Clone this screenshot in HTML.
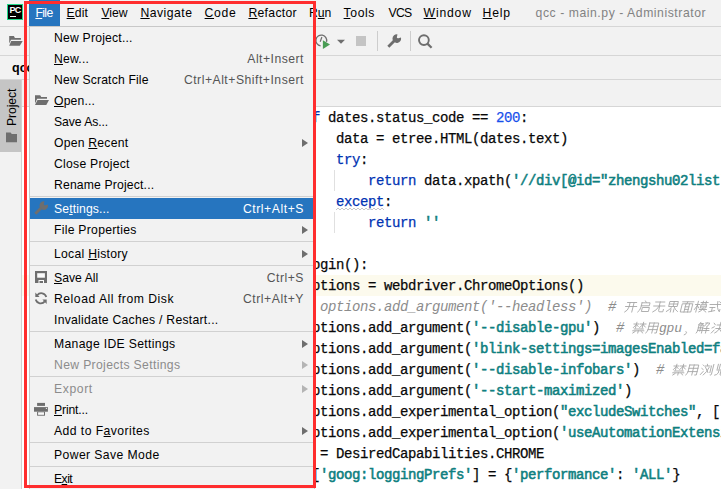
<!DOCTYPE html>
<html><head><meta charset="utf-8">
<style>
*{margin:0;padding:0;box-sizing:border-box}
html,body{width:721px;height:489px;overflow:hidden;background:#f2f2f2;position:relative;font-family:"Liberation Sans",sans-serif;font-size:12.2px;color:#000}
.abs{position:absolute}
u{text-decoration:underline;text-underline-offset:1px;text-decoration-thickness:1px}
.mi{position:absolute;top:5px;white-space:nowrap;line-height:16px}
.ln{position:absolute;height:21px;line-height:21px;font-family:"Liberation Mono",monospace;font-size:14px;letter-spacing:-0.4px;white-space:pre;color:#080808;-webkit-text-stroke:0.25px currentColor}
.kw{color:#0033b3}
.num{color:#1750eb}
.str{color:#0f8080;-webkit-text-stroke:0.55px currentColor}
.cmt{color:#8c8c8c;font-style:italic;-webkit-text-stroke:0}
#popup{left:29px;top:26px;width:286px;height:470px;background:#f2f2f2;border:1px solid #c8c8c8}
.it{position:absolute;left:0;width:284px;height:21px;line-height:21px;white-space:nowrap}
.it .t{position:absolute;left:24px;top:0}
.it .k{position:absolute;right:10px;top:0;color:#555}
.it.dis{color:#8c8c8c}
.it.sel{background:#2675bf;color:#fff}
.it.sel .k{color:#fff}
.arr{position:absolute;left:272px;top:7px;width:0;height:0;border-top:4px solid transparent;border-bottom:4px solid transparent;border-left:6px solid #6e6e6e}
.arr.dis{border-left-color:#b4b4b4}
.sep{position:absolute;left:0;width:284px;height:1px;background:#d1d1d1}
.ico{position:absolute;left:4px;top:3px;width:16px;height:16px}
#red{left:24px;top:1px;width:292px;height:487px;border:3px solid #ff2d2e}
</style></head><body>
<div class="abs" style="left:0;top:26px;width:721px;height:1px;background:#d6d6d6"></div>
<div class="abs" style="left:0;top:55px;width:721px;height:1px;background:#d6d6d6"></div>
<div class="abs" style="left:0;top:79px;width:721px;height:1px;background:#d6d6d6"></div>
<div class="abs" style="left:22px;top:106px;width:699px;height:1px;background:#d6d6d6"></div>
<div class="abs" style="left:21px;top:80px;width:1px;height:409px;background:#d0d0d0"></div>
<div class="abs" style="left:0;top:80px;width:21px;height:72px;background:#c5c5c5"></div>
<div class="abs" style="left:22px;top:107px;width:699px;height:382px;background:#fff"></div>
<div class="abs" style="left:7px;top:4px;width:16px;height:16px;background:#21d789;"></div>
<div class="abs" style="left:8px;top:5px;width:14px;height:14px;background:#000;"></div>
<div class="abs" style="left:9.5px;top:5px;font-size:9px;font-weight:bold;color:#fff;line-height:10px;letter-spacing:-0.7px">PC</div>
<div class="abs" style="left:10px;top:16px;width:6px;height:1px;background:#fff"></div>
<div class="abs" style="left:29px;top:0;width:31px;height:26px;background:#2675bf"></div>
<div class="mi" id="mFile" style="left:35.4px;color:#fff;letter-spacing:-0.599px;"><u>F</u>ile</div>
<div class="mi" id="mEdit" style="left:66.6px;letter-spacing:0.134px;"><u>E</u>dit</div>
<div class="mi" id="mView" style="left:101.4px;"><u>V</u>iew</div>
<div class="mi" id="mNav" style="left:140.4px;letter-spacing:0.486px;"><u>N</u>avigate</div>
<div class="mi" id="mCode" style="left:204.6px;letter-spacing:0.667px;"><u>C</u>ode</div>
<div class="mi" id="mRef" style="left:248.4px;letter-spacing:0.313px;"><u>R</u>efactor</div>
<div class="mi" id="mRun" style="left:309.0px;">R<u>u</u>n</div>
<div class="mi" id="mTools" style="left:343.6px;letter-spacing:0.600px;"><u>T</u>ools</div>
<div class="mi" id="mVCS" style="left:388.6px;letter-spacing:-0.800px;">VCS</div>
<div class="mi" id="mWin" style="left:423.6px;letter-spacing:0.800px;"><u>W</u>indow</div>
<div class="mi" id="mHelp" style="left:482.6px;letter-spacing:0.799px;"><u>H</u>elp</div>
<div class="mi" id="mTitle" style="left:535.6px;color:#828282;letter-spacing:0.556px;">qcc - main.py - Administrator</div>
<div class="abs" style="left:12px;top:60px;font-weight:bold;font-size:12.5px;line-height:16px">qcc</div>
<div class="abs" style="left:22px;top:275px;width:699px;height:21px;background:#fcfaed"></div>
<div class="abs" style="left:334px;top:170px;width:1px;height:21px;background:#e0e0e0"></div>
<div class="abs" style="left:334px;top:212px;width:1px;height:21px;background:#e0e0e0"></div>
<div class="ln" style="left:304px;top:108px"><span class="kw">if</span> dates.status_code == <span class="num">200</span>:</div>
<div class="ln" style="left:336px;top:129px">data = etree.HTML(dates.text)</div>
<div class="ln" style="left:336px;top:150px"><span class="kw">try</span>:</div>
<div class="ln" style="left:368px;top:171px"><span class="kw">return</span> data.xpath(<span class="str">'//div[@id="zhengshu02list"]'</span></div>
<div class="ln" style="left:336px;top:192px"><span class="kw">except</span>:</div>
<div class="ln" style="left:368px;top:213px"><span class="kw">return</span> <span class="str">''</span></div>
<div class="ln" style="left:272px;top:255px"><span class="kw">def</span> login():</div>
<div class="ln" style="left:304px;top:276px">options = webdriver.ChromeOptions()</div>
<div class="ln" style="left:304px;top:297px"><span class="cmt"># options.add_argument('--headless')  # </span></div>
<div class="ln" style="left:304px;top:318px">options.add_argument(<span class="str">'--disable-gpu'</span>)  <span class="cmt"># </span></div>
<div class="ln" style="left:304px;top:339px">options.add_argument(<span class="str">'blink-settings=imagesEnabled=false'</span>)</div>
<div class="ln" style="left:304px;top:360px">options.add_argument(<span class="str">'--disable-infobars'</span>)  <span class="cmt"># </span></div>
<div class="ln" style="left:304px;top:381px">options.add_argument(<span class="str">'--start-maximized'</span>)</div>
<div class="ln" style="left:304px;top:402px">options.add_experimental_option(<span class="str">"excludeSwitches"</span>, [<span class="str">"enable-automation"</span>])</div>
<div class="ln" style="left:304px;top:423px">options.add_experimental_option(<span class="str">'useAutomationExtension'</span>, False)</div>
<div class="ln" style="left:296px;top:444px">dc = DesiredCapabilities.CHROME</div>
<div class="ln" style="left:296px;top:465px">dc[<span class="str">'goog:loggingPrefs'</span>] = {<span class="str">'performance'</span>: <span class="str">'ALL'</span>}</div>
<svg class="abs" style="left:336px;top:207px" width="48" height="4"><path d="M0 3 L2 1 L4 3 L6 1 L8 3 L10 1 L12 3 L14 1 L16 3 L18 1 L20 3 L22 1 L24 3 L26 1 L28 3 L30 1 L32 3 L34 1 L36 3 L38 1 L40 3 L42 1 L44 3 L46 1 L48 3" stroke="#c8c8c8" stroke-width="1" fill="none"/></svg>
<svg class="abs" style="left:0;top:0;pointer-events:none" width="721" height="489"><g stroke="#a6a6a6" stroke-width="0.85" fill="none" stroke-linecap="square"><path transform="translate(625.0 301) skewX(-14) translate(1.5 0)" d="M1.5 1.5H10.5 M0.5 5.5H11.5 M4 1.5V6 Q3.8 9.5 1 11 M8 1.5V11"/><path transform="translate(639.0 301) skewX(-14) translate(1.5 0)" d="M5 0L6 1.2 M2 1.8H10V4.8H2 M2 1.8V6Q2 9.5 0 11 M4 6.5H10.5V10.5H4Z"/><path transform="translate(653.0 301) skewX(-14) translate(1.5 0)" d="M1.5 1H10.5 M0.5 5H11.5 M6 1V5Q4.5 9.5 1 11 M6.5 5V9.5Q6.5 10.8 8 10.8H11V8.5"/><path transform="translate(667.0 301) skewX(-14) translate(1.5 0)" d="M2 0.5H10V5.5H2Z M6 0.5V5.5 M2 3H10 M4.5 6.5Q3 9 0.5 10.5 M7.5 6.5Q9 9 11.5 10.5 M4.5 8V11 M7.5 8V11"/><path transform="translate(681.0 301) skewX(-14) translate(1.5 0)" d="M0.5 0.8H11.5 M5.5 0.8L5 2.8 M1 2.8H11V11H1Z M4.2 2.8V11 M7.8 2.8V11 M4.2 5.8H7.8 M4.2 8.4H7.8"/><path transform="translate(695.0 301) skewX(-14) translate(1.5 0)" d="M0 3.5H4 M2 0.3V11 M2 4.5L0 8.5 M2 4.5L4 7 M5 1.5H12 M7 0.3V2.8 M10 0.3V2.8 M6 3.3H11V7H6Z M6 5.2H11 M5 8.5H12 M8.5 7Q8.2 10 5 11 M8.5 8.5L12 11"/><path transform="translate(709.0 301) skewX(-14) translate(1.5 0)" d="M0.5 3.5H11 M7.5 0.5Q7.8 7.5 11.5 10.8V8.5 M9.5 0.8L10.8 2 M1 6.5H6 M3.5 6.5V10.2 M0.8 10.8L6.5 9.6"/><path transform="translate(633.0 322) skewX(-14) translate(1.5 0)" d="M0 2H5 M2.5 0.3V6 M2.5 2.5L0.3 5.5 M2.5 2.5L4.8 4.5 M6.5 2H12 M9.2 0.3V6 M9.2 2.5L6.5 5.5 M9.2 2.5L12 5 M1.5 7H10.5 M0.5 8.8H11.5 M6 8.8V11 M3 9.5L1 11 M9 9.5L11 11"/><path transform="translate(647.0 322) skewX(-14) translate(1.5 0)" d="M1.5 1H10.5V11H9 M1.5 1V7Q1.5 10 0 11 M1.5 4.3H10.5 M1.5 7.6H10.5 M6 1V11"/><path transform="translate(685.0 322) skewX(-14) translate(1.5 0)" d="M2 9.5Q3 10 2.5 11.5Q2 12.5 1 12.8"/><path transform="translate(697.5 322) skewX(-14) translate(1.5 0)" d="M2 0.3L0.5 2.5 M2 1.5H5L4 3 M0.8 3H5.2V11 M0.8 3V8Q0.8 10 0 11 M0.8 5.8H5.2 M0.8 8.4H5.2 M3 3V9 M7 1H11Q11 3.5 9 4.5 M8.5 1Q8 3 6.5 4 M6.5 6.5H11.5 M6 8.5H12 M9.2 5V11"/><path transform="translate(711.5 322) skewX(-14) translate(1.5 0)" d="M1.5 1.2L3 2.8 M0.5 6L2.5 4.8 M1 11L3.2 8 M5 3H11V6.5 M4.5 6.5H12 M8 0.3V6.5Q7 10 4.5 11 M8.2 7L11.8 11"/><path transform="translate(673.0 364) skewX(-14) translate(1.5 0)" d="M0 2H5 M2.5 0.3V6 M2.5 2.5L0.3 5.5 M2.5 2.5L4.8 4.5 M6.5 2H12 M9.2 0.3V6 M9.2 2.5L6.5 5.5 M9.2 2.5L12 5 M1.5 7H10.5 M0.5 8.8H11.5 M6 8.8V11 M3 9.5L1 11 M9 9.5L11 11"/><path transform="translate(687.0 364) skewX(-14) translate(1.5 0)" d="M1.5 1H10.5V11H9 M1.5 1V7Q1.5 10 0 11 M1.5 4.3H10.5 M1.5 7.6H10.5 M6 1V11"/><path transform="translate(701.0 364) skewX(-14) translate(1.5 0)" d="M1 1L2.5 2.2 M0.5 4.5L2 5.5 M0.5 10.5L2.5 7.5 M5 0.3L5.5 1.5 M3.5 2H8 M4 3.5L7.5 8.5 M7.5 3.5Q6.5 8 3.5 11 M9.5 2V8.5 M11.5 0.5V10.5Q11.5 11.3 10.5 11"/><path transform="translate(715.0 364) skewX(-14) translate(1.5 0)" d="M2 0.3V5 M4 0.3V5 M6.5 0.3L5.8 2.5 M6.5 1.5H11 M7.5 2.5L9 3.5 M2 6H10V9.5 M4 7V9 Q3 11 1 11.2 M6.2 7V10.5Q6.2 11.2 7 11.2H11V10"/></g></svg><div class="ln cmt" style="left:659px;top:318px;font-size:13px;letter-spacing:-0.2px">gpu</div>

<svg class="abs" style="left:7px;top:33px" width="18" height="16" viewBox="0 0 18 16"><path d="M2.2 3.1H6.9L7.9 5.1H13.9V6.7H4L2.2 10.5Z" fill="#6e6e6e"/><path d="M4.2 8H15.7L12.8 12.8H2.2Z" fill="#6e6e6e"/></svg>
<svg class="abs" style="left:312px;top:32px" width="24" height="20" viewBox="0 0 24 20"><path d="M14.5 9.8A5.4 5.4 0 1 0 8.6 13.8" stroke="#6e6e6e" stroke-width="1.3" fill="none"/><path d="M9.9 5L8.2 9.8" stroke="#6e6e6e" stroke-width="1.2"/><path d="M10.9 8.3L18 12.6L10.9 16.9Z" fill="#499c54"/></svg>
<svg class="abs" style="left:336px;top:38px" width="10" height="7" viewBox="0 0 10 7"><path d="M1 1.8H9L5 5.8Z" fill="#6e6e6e"/></svg>
<div class="abs" style="left:356px;top:36px;width:10px;height:10px;background:#c4c4c4"></div>
<div class="abs" style="left:377px;top:31px;width:1px;height:20px;background:#cdcdcd"></div>
<svg class="abs" style="left:387px;top:34px" width="16" height="16" viewBox="0 0 16 16"><path d="M0.3 11.8L2.3 13.8L8.6 7.6L6.6 5.6Z" fill="#6e6e6e"/><path d="M10.5 0.4A4.3 4.3 0 1 0 13.9 3.4L11.4 4.3Q10 4.6 9.8 3.2Z" fill="#6e6e6e"/></svg>
<div class="abs" style="left:410px;top:31px;width:1px;height:20px;background:#cdcdcd"></div>
<svg class="abs" style="left:416px;top:32px" width="18" height="18" viewBox="0 0 18 18"><circle cx="7.9" cy="8.1" r="4.9" stroke="#6e6e6e" stroke-width="1.9" fill="none"/><path d="M11.4 11.6L15.6 15.8" stroke="#6e6e6e" stroke-width="2.2"/></svg>
<div class="abs" style="left:-6px;top:100px;width:36px;height:16px;transform:rotate(-90deg);font-size:12.2px;line-height:16px;letter-spacing:-0.1px;white-space:nowrap">Project</div>
<svg class="abs" style="left:5px;top:131px" width="14" height="13" viewBox="0 0 14 13"><path d="M1 1.5H5.6L6.8 3H12V11.2H1Z" fill="#6e6e6e"/></svg>

<div id="popup" class="abs">
<div class="it" style="top:0px"><span class="t" id="i0" style="top:1px;letter-spacing:0.201px;">New Project...</span></div>
<div class="it" style="top:21px"><span class="t" id="i1" style="top:1px;letter-spacing:0.200px;"><u>N</u>ew...</span><span class="k" id="i1k" style="top:1px;letter-spacing:0.490px;">Alt+Insert</span></div>
<div class="it" style="top:42px"><span class="t" id="i2" style="top:1px;letter-spacing:0.159px;">New Scratch File</span><span class="k" id="i2k" style="top:1px;letter-spacing:0.510px;">Ctrl+Alt+Shift+Insert</span></div>
<div class="it" style="top:63px"><svg class="ico" viewBox="0 0 16 16"><path d="M1 2.3H6.2L7.2 3.9H13V5.7H3.2L1 10.6Z" fill="#6e6e6e"/><path d="M3.5 7.1H15L12.3 11.9H1Z" fill="#6e6e6e"/></svg><span class="t" id="i3" style="top:1px;letter-spacing:0.167px;"><u>O</u>pen...</span></div>
<div class="it" style="top:84px"><span class="t" id="i4" style="top:1px;letter-spacing:-0.069px;">Save As...</span></div>
<div class="it" style="top:105px"><span class="t" id="i5" style="top:1px;letter-spacing:0.220px;">Open <u>R</u>ecent</span><i class="arr"></i></div>
<div class="it" style="top:126px"><span class="t" id="i6" style="top:1px;letter-spacing:0.250px;">Close Project</span></div>
<div class="it" style="top:147px"><span class="t" id="i7" style="top:1px;letter-spacing:0.159px;">Rename Project...</span></div>
<div class="sep" style="top:169px"></div>
<div class="it sel" style="top:171px"><svg class="ico" viewBox="0 0 16 16"><path d="M0.3 11.8L2.3 13.8L8.6 7.6L6.6 5.6Z" fill="#6e6e6e"/><path d="M10.5 0.4A4.3 4.3 0 1 0 13.9 3.4L11.4 4.3Q10 4.6 9.8 3.2Z" fill="#6e6e6e"/></svg><span class="t" id="i8" style="top:1px;letter-spacing:0.120px;">Se<u>t</u>tings...</span><span class="k" id="i8k" style="top:1px;letter-spacing:0.556px;">Ctrl+Alt+S</span></div>
<div class="it" style="top:192px"><span class="t" id="i9" style="top:1px;letter-spacing:0.270px;">File Properties</span><i class="arr"></i></div>
<div class="sep" style="top:214px"></div>
<div class="it" style="top:216px"><span class="t" id="i10" style="top:1px;letter-spacing:0.265px;">Local <u>H</u>istory</span><i class="arr"></i></div>
<div class="sep" style="top:238px"></div>
<div class="it" style="top:240px"><svg class="ico" viewBox="0 0 16 16"><rect x="1" y="1" width="12" height="12" fill="#6e6e6e"/><rect x="3.2" y="3.2" width="7.7" height="4.5" fill="#fafafa"/><rect x="4.5" y="10" width="5.5" height="3" fill="#fafafa"/><rect x="5.5" y="11" width="3.5" height="2" fill="#6e6e6e"/></svg><span class="t" id="i11" style="top:1px;letter-spacing:0.027px;"><u>S</u>ave All</span><span class="k" id="i11k" style="top:1px;letter-spacing:0.520px;">Ctrl+S</span></div>
<div class="it" style="top:261px"><svg class="ico" viewBox="0 0 16 16"><path d="M12.3 6A5.2 5.2 0 0 0 3.2 4.2" stroke="#6e6e6e" stroke-width="1.8" fill="none"/><path d="M1.3 1.6V6H5.6Z" fill="#6e6e6e"/><path d="M1.7 8.6A5.2 5.2 0 0 0 10.8 10.4" stroke="#6e6e6e" stroke-width="1.8" fill="none"/><path d="M12.7 13V8.6H8.4Z" fill="#6e6e6e"/></svg><span class="t" id="i12" style="top:1px;letter-spacing:0.517px;">Reload All from Disk</span><span class="k" id="i12k" style="top:1px;letter-spacing:0.556px;">Ctrl+Alt+Y</span></div>
<div class="it" style="top:282px"><span class="t" id="i13" style="top:1px;letter-spacing:0.266px;">Invalidate Caches / Restart...</span></div>
<div class="sep" style="top:304px"></div>
<div class="it" style="top:306px"><span class="t" id="i14" style="top:1px;letter-spacing:0.333px;">Manage IDE Settings</span><i class="arr"></i></div>
<div class="it dis" style="top:327px"><span class="t" id="i15" style="top:1px;letter-spacing:0.340px;">New Projects Settings</span><i class="arr dis"></i></div>
<div class="sep" style="top:349px"></div>
<div class="it dis" style="top:351px"><span class="t" id="i16" style="top:1px;letter-spacing:0.600px;">Export</span><i class="arr dis"></i></div>
<div class="it" style="top:372px"><svg class="ico" viewBox="0 0 16 16"><rect x="3.1" y="0.9" width="7.9" height="3" fill="#6e6e6e"/><rect x="-0.1" y="5.1" width="14" height="4.6" fill="#6e6e6e"/><rect x="3.1" y="9.7" width="7.9" height="4" fill="#6e6e6e"/><rect x="4.1" y="10.3" width="5.9" height="2.5" fill="#fafafa"/><circle cx="12.4" cy="6.4" r="0.6" fill="#e8e8e8"/></svg><span class="t" id="i17" style="top:1px;letter-spacing:-0.143px;"><u>P</u>rint...</span></div>
<div class="it" style="top:393px"><span class="t" id="i18" style="top:1px;letter-spacing:0.438px;">Add to F<u>a</u>vorites</span><i class="arr"></i></div>
<div class="sep" style="top:415px"></div>
<div class="it" style="top:417px"><span class="t" id="i19" style="top:1px;letter-spacing:0.398px;">Power Save Mode</span></div>
<div class="sep" style="top:439px"></div>
<div class="it" style="top:441px"><span class="t" id="i20" style="top:1px;letter-spacing:-0.533px;">E<u>x</u>it</span></div>
</div>
<div id="red" class="abs"></div>
</body></html>
